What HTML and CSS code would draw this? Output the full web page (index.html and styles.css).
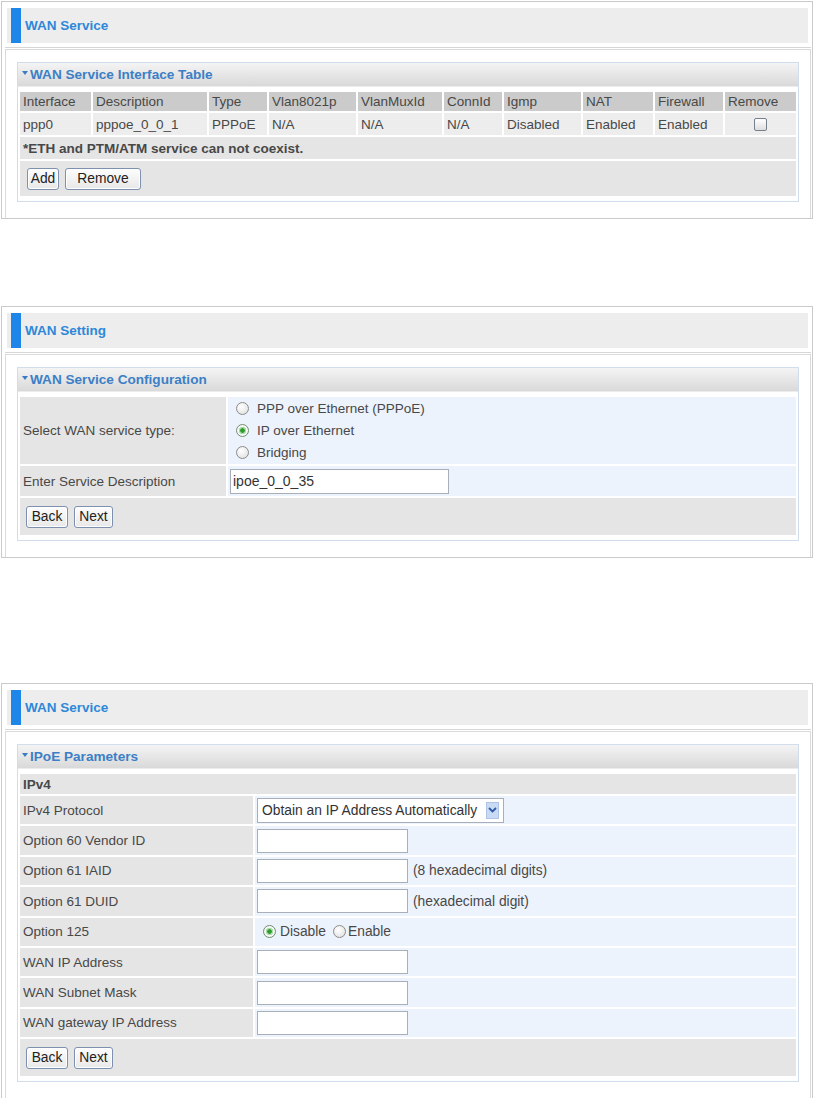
FILE: index.html
```html
<!DOCTYPE html>
<html>
<head>
<meta charset="utf-8">
<title>WAN Service</title>
<link rel="stylesheet" href="styles.css">
</head>
<body>
<div class="page">

<section class="panel">
  <div class="ptitle"><span class="pbar"></span><h1>WAN Service</h1></div>
  <div class="frame"><div class="frame-in">
    <div class="box">
      <div class="bhead"><span class="tri"></span>WAN Service Interface Table</div>
      <table class="grid svc">
        <colgroup>
          <col class="c1"><col class="c2"><col class="c3"><col class="c4"><col class="c5">
          <col class="c6"><col class="c7"><col class="c8"><col class="c9"><col class="c10">
        </colgroup>
        <tr class="th">
          <td>Interface</td><td>Description</td><td>Type</td><td>Vlan8021p</td><td>VlanMuxId</td>
          <td>ConnId</td><td>Igmp</td><td>NAT</td><td>Firewall</td><td>Remove</td>
        </tr>
        <tr class="tdr">
          <td>ppp0</td><td>pppoe_0_0_1</td><td>PPPoE</td><td>N/A</td><td>N/A</td>
          <td>N/A</td><td>Disabled</td><td>Enabled</td><td>Enabled</td><td class="ctr"><span class="chk"></span></td>
        </tr>
        <tr class="note"><td colspan="10">*ETH and PTM/ATM service can not coexist.</td></tr>
        <tr class="btnrow"><td colspan="10"><div class="btns"><button class="b-add">Add</button><button class="b-rem">Remove</button></div></td></tr>
      </table>
    </div>
  </div></div>
</section>

<section class="panel panel-2">
  <div class="ptitle"><span class="pbar"></span><h1>WAN Setting</h1></div>
  <div class="frame"><div class="frame-in">
    <div class="box">
      <div class="bhead"><span class="tri"></span>WAN Service Configuration</div>
      <table class="grid form2">
        <colgroup><col class="l2"><col></colgroup>
        <tr class="r-radio">
          <td class="lbl">Select WAN service type:</td>
          <td class="val">
            <div class="radios">
              <div class="ropt"><span class="radio"></span>PPP over Ethernet (PPPoE)</div>
              <div class="ropt"><span class="radio on"></span>IP over Ethernet</div>
              <div class="ropt"><span class="radio"></span>Bridging</div>
            </div>
          </td>
        </tr>
        <tr class="r-desc">
          <td class="lbl">Enter Service Description</td>
          <td class="val"><input class="txt txt-wide" type="text" value="ipoe_0_0_35"></td>
        </tr>
        <tr class="btnrow2"><td colspan="2"><div class="btns"><button class="b-back">Back</button><button class="b-next">Next</button></div></td></tr>
      </table>
    </div>
  </div></div>
</section>

<section class="panel panel-3">
  <div class="ptitle"><span class="pbar"></span><h1>WAN Service</h1></div>
  <div class="frame"><div class="frame-in">
    <div class="box">
      <div class="bhead"><span class="tri"></span>IPoE Parameters</div>
      <table class="grid form3">
        <colgroup><col class="l3"><col></colgroup>
        <tr class="sub"><td colspan="2">IPv4</td></tr>
        <tr class="fr">
          <td class="lbl">IPv4 Protocol</td>
          <td class="val"><div class="select"><span class="sel-text">Obtain an IP Address Automatically</span><span class="sel-arrow"><svg width="9" height="6" viewBox="0 0 9 6"><path d="M1 1 L4.5 4.5 L8 1" fill="none" stroke="#2d5aa6" stroke-width="1.8"/></svg></span></div></td>
        </tr>
        <tr class="fr">
          <td class="lbl">Option 60 Vendor ID</td>
          <td class="val"><input class="txt" type="text"></td>
        </tr>
        <tr class="fr">
          <td class="lbl">Option 61 IAID</td>
          <td class="val"><div class="inrow"><input class="txt" type="text"><span class="hint">(8 hexadecimal digits)</span></div></td>
        </tr>
        <tr class="fr">
          <td class="lbl">Option 61 DUID</td>
          <td class="val"><div class="inrow"><input class="txt" type="text"><span class="hint">(hexadecimal digit)</span></div></td>
        </tr>
        <tr class="fr">
          <td class="lbl">Option 125</td>
          <td class="val"><div class="opt125"><span class="radio on"></span><span class="rl">Disable</span><span class="radio"></span><span class="rl">Enable</span></div></td>
        </tr>
        <tr class="fr">
          <td class="lbl">WAN IP Address</td>
          <td class="val"><input class="txt" type="text"></td>
        </tr>
        <tr class="fr">
          <td class="lbl">WAN Subnet Mask</td>
          <td class="val"><input class="txt" type="text"></td>
        </tr>
        <tr class="fr">
          <td class="lbl">WAN gateway IP Address</td>
          <td class="val"><input class="txt" type="text"></td>
        </tr>
        <tr class="btnrow2"><td colspan="2"><div class="btns"><button class="b-back">Back</button><button class="b-next">Next</button></div></td></tr>
      </table>
    </div>
  </div></div>
</section>

</div>
</body>
</html>
```

FILE: styles.css
```css
* { box-sizing: border-box; }

body {
  margin: 0;
  background: #ffffff;
  font-family: "Liberation Sans", Arial, sans-serif;
  font-size: 13.5px;
  color: #484848;
}

.page { padding: 1px 0 0 1px; }

.panel {
  width: 812px;
  border: 1px solid #cacaca;
}
.panel-2 { margin-top: 87px; }
.panel-3 { margin-top: 125px; }

.ptitle {
  margin: 6px 4px 0 5px;
  height: 35px;
  background: #ededed;
  display: flex;
  align-items: stretch;
}
.pbar {
  width: 10px;
  margin-left: 4px;
  background: #1d86e8;
}
.ptitle h1 {
  margin: 0 0 0 4px;
  align-self: center;
  font-size: 13.5px;
  font-weight: bold;
  color: #2d88d9;
}

.frame {
  margin: 4px 1px 0 3px;
  border-top: 1px solid #d6d6d6;
  padding-top: 1px;
}
.frame-in {
  border: 1px solid #dadada;
  border-bottom: none;
  padding: 12px 11px 16px 11px;
}

.box { border: 1px solid #d1ddec; }

.bhead {
  height: 24px;
  display: flex;
  align-items: center;
  padding-left: 4px;
  background: linear-gradient(#f4f4f4, #d9d9d9);
  border-bottom: 1px solid #ececec;
  font-size: 13.6px;
  font-weight: bold;
  color: #3c7fc6;
}
.tri {
  width: 0;
  height: 0;
  border-left: 3.5px solid transparent;
  border-right: 3.5px solid transparent;
  border-top: 4px solid #3a7bc3;
  margin-right: 2px;
  margin-bottom: 3px;
}

.grid {
  width: 100%;
  border-collapse: separate;
  border-spacing: 2px;
  margin: 3px 0;
  table-layout: fixed;
}
.grid td {
  padding: 0 3px;
  vertical-align: middle;
  white-space: nowrap;
}

.svc .c1 { width: 71px; }
.svc .c2 { width: 114px; }
.svc .c3 { width: 58px; }
.svc .c4 { width: 87px; }
.svc .c5 { width: 84px; }
.svc .c6 { width: 58px; }
.svc .c7 { width: 77px; }
.svc .c8 { width: 70px; }
.svc .c9 { width: 68px; }
.svc .c10 { width: 71px; }

.th td { background: #cbcbcb; height: 19px; }
.tdr td { background: #ededed; height: 22px; }
.note td { background: #e5e5e5; height: 22px; font-weight: bold; }
.btnrow td { background: #e5e5e5; height: 35px; padding-left: 7px; }
.btnrow2 td { background: #e5e5e5; height: 37px; padding-left: 6px; }
.ctr { text-align: center; }

.chk {
  display: inline-block;
  width: 13px;
  height: 13px;
  vertical-align: middle;
  border: 1px solid #76808c;
  border-radius: 2px;
  background: linear-gradient(#ffffff, #dedede);
}

.btns { display: flex; gap: 6px; align-items: center; }

button {
  font-family: "Liberation Sans", Arial, sans-serif;
  font-size: 13.8px;
  color: #222;
  height: 22px;
  line-height: 18px;
  border: 1px solid #7d90ad;
  border-radius: 3px;
  background: linear-gradient(#fdfdfd, #e8e8e8);
  box-shadow: inset 0 0 0 1px #ffffff;
  padding: 0;
  text-align: center;
}
.b-add { width: 32px; }
.b-rem { width: 76px; }
.b-back { width: 42px; }
.b-next { width: 39px; }

.lbl { background: #e5e5e5; }
.val { background: #edf3fc; }

.form2 .l2 { width: 206px; }
.form3 .l3 { width: 233px; }

.r-radio td { height: 67px; }
.r-desc td { height: 30px; }

.radios { display: flex; flex-direction: column; padding-left: 5px; }
.ropt { height: 22px; display: flex; align-items: center; gap: 8px; }

.radio {
  flex: none;
  display: inline-block;
  width: 13px;
  height: 13px;
  border-radius: 50%;
  border: 1px solid #8b8b8b;
  background: radial-gradient(circle at 40% 35%, #ffffff, #dcdcdc);
}
.radio.on {
  border-color: #6f8d6f;
  background: radial-gradient(circle, #2f9b2f 0 2px, #a9dca9 2.5px 3.5px, #f7f7f7 4px);
}

.txt {
  display: block;
  margin-left: -1px;
  width: 151px;
  height: 24px;
  border: 1px solid #a8afb8;
  background: #ffffff;
  font-family: "Liberation Sans", Arial, sans-serif;
  font-size: 14px;
  color: #333;
  padding: 0 2px;
}
.txt-wide { width: 219px; height: 25px; }

.sub td { background: #e5e5e5; height: 20px; font-weight: bold; }
.fr td { height: 28.4px; }

.select {
  margin-left: -1px;
  width: 247px;
  height: 25px;
  border: 1px solid #a8afb8;
  background: #ffffff;
  display: flex;
  align-items: center;
  justify-content: space-between;
  padding: 0 4px 0 4px;
  font-size: 13.8px;
  color: #333;
}
.sel-arrow {
  width: 13px;
  height: 17px;
  background: #c8daf4;
  border: 1px solid #aec4e6;
  display: flex;
  align-items: center;
  justify-content: center;
}

.inrow { display: flex; align-items: center; gap: 5px; }
.hint { font-size: 13.8px; }

.opt125 { display: flex; align-items: center; padding-left: 5px; }
.opt125 .rl { margin: 0 7px 0 4px; font-size: 13.8px; }
.opt125 .rl:last-child { margin-left: 2px; }
```
